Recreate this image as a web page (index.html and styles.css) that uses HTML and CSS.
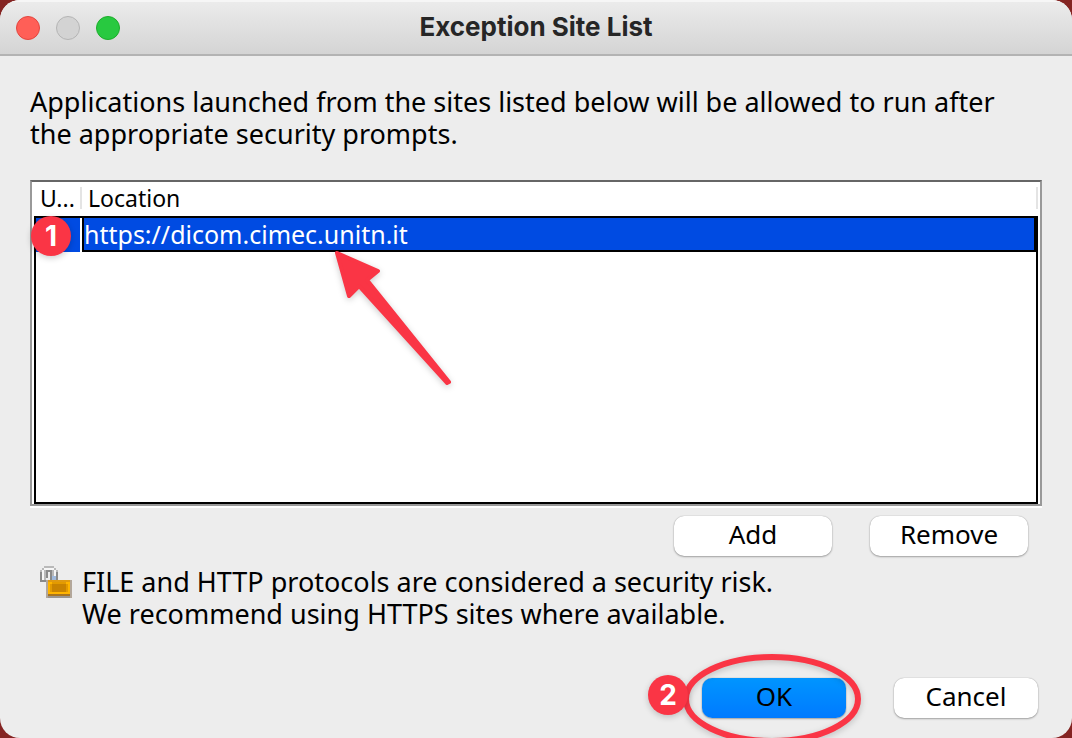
FILE: index.html
```html
<!DOCTYPE html>
<html lang="en">
<head>
<meta charset="utf-8">
<title>Exception Site List</title>
<link rel="stylesheet" href="styles.css">
</head>
<body>
<main class="window">
  <header class="titlebar">
    <div class="lights">
      <button class="light close" aria-label="Close"></button>
      <button class="light minimize" aria-label="Minimize" disabled></button>
      <button class="light zoom" aria-label="Zoom"></button>
    </div>
    <h1 class="title">Exception Site List</h1>
  </header>
  <div class="content">
    <p class="intro">Applications launched from the sites listed below will be allowed to run after the appropriate security prompts.</p>
    <div class="list">
      <table class="sites">
        <thead>
          <tr><th class="col-user" scope="col"><span class="label">U...</span></th><th scope="col"><span class="label">Location</span></th></tr>
        </thead>
        <tbody>
          <tr class="selected">
            <td class="user"><span class="badge badge-one">1</span></td>
            <td class="location">https://dicom.cimec.unitn.it<svg class="arrow" viewBox="0 0 130 145" aria-hidden="true"><path d="M7 7 L48 25 L37 34 L119 136 L117 137 L29 40 L19 50 Z"/></svg></td>
          </tr>
          <tr class="rest"><td colspan="2"></td></tr>
        </tbody>
      </table>
    </div>
    <div class="actions edit">
      <button class="button">Add</button>
      <button class="button">Remove</button>
    </div>
    <div class="notice">
      <svg class="lock" viewBox="0 0 16 16" shape-rendering="crispEdges" aria-hidden="true">
        <path fill="#b9b9b9" d="M2 0h5v1h1v1h1v6H6V3H5V2H4v1H3v5H0V2h1V1h1z"/>
        <path fill="#8a8a8a" d="M0 3h1v5H0zM3 3h1v3H3zM1 7h2v1H1zM8 3h1v4H8zM3 2h3v1H3zM5 3h1v4H5z"/>
        <path fill="#f6f6f6" d="M2 1h5v1H2zM1 2h1v5H1zM7 2h1v3H7z"/>
        <path fill="#9fb9dc" d="M6 5h2v2H6z"/>
        <path fill="#b3a79a" d="M3 7h13v9H3z"/>
        <path fill="#9b9690" d="M4 15h11v1H4z"/>
        <path fill="#e09a10" d="M4 7h11v1H4z"/>
        <path fill="#ffb400" d="M4 8h11v6H4z"/>
        <path fill="#c98300" d="M6 9h7v4H6z"/>
        <path fill="#e39a00" d="M5 9h1v4H5zM13 9h1v4h-1zM6 8h7v1H6z"/>
        <path fill="#a87420" d="M4 14h11v1H4z"/>
      </svg>
      <p>FILE and HTTP protocols are considered a security risk.<br>We recommend using HTTPS sites where available.</p>
    </div>
    <div class="actions confirm">
      <div class="marked">
        <button class="button primary">OK</button>
        <svg class="ring" viewBox="0 0 178 90" aria-hidden="true"><ellipse cx="89" cy="45" rx="86" ry="42"/></svg>
        <span class="badge badge-two">2</span>
      </div>
      <button class="button">Cancel</button>
    </div>
  </div>
</main>
</body>
</html>
```
FILE: styles.css
```css
* { box-sizing: border-box; }

body {
  margin: 0;
  background: #842422;
  font: 27px/32px "Noto Sans", sans-serif;
  color: #000;
}

p, h1 { margin: 0; }

.window {
  display: flex;
  flex-direction: column;
  min-height: 100vh;
  overflow: hidden;
  border-radius: 20px;
  background: #ededed;
}

.titlebar {
  display: grid;
  grid-template-columns: 1fr auto 1fr;
  align-items: center;
  height: 56px;
  padding: 0 16px;
  border-bottom: 2px solid #b3b3b3;
  background: linear-gradient(#ececec, #d4d4d4);
  box-shadow: inset 0 2px #f6f6f6;
}

.lights { display: flex; gap: 16px; padding-top: 2px; }

.light {
  width: 24px;
  height: 24px;
  padding: 0;
  border: 1px solid;
  border-radius: 50%;
}

.close { background: #ff5f57; border-color: #e2463f; }
.minimize { background: #d3d3d3; border-color: #b4b4b4; }
.zoom { background: #28c940; border-color: #1dad2b; }

.title {
  color: #262626;
  font: bold 26px/32px Inter, sans-serif;
}

.content {
  display: flex;
  flex: 1;
  flex-direction: column;
  padding: 30px 30px 20px;
}

.intro { margin-bottom: 30px; }

.list {
  display: flex;
  flex: 1;
  padding: 0 2px;
  border: 2px solid #999;
  border-top-color: #666;
  background: #fff;
  box-shadow: 0 2px #fff;
}

.sites {
  width: 100%;
  border-spacing: 0;
  table-layout: fixed;
}

.sites th {
  height: 34px;
  padding: 0 0 2px;
  font-size: 23px;
  font-weight: normal;
  line-height: 22px;
  text-align: left;
}

.sites th .label {
  display: block;
  padding-left: 6px;
  border-right: 2px solid #e4e4e4;
}

.sites .col-user { width: 48px; }

.sites td { padding: 0; }

.selected td {
  position: relative;
  height: 36px;
  border-top: 2px solid #000;
  background: #004be2;
  color: #fff;
  font-size: 25px;
  line-height: 32px;
}

.sites .user {
  border-left: 2px solid #000;
  box-shadow: inset -2px 0 #fff;
}

.sites .location {
  border: 2px solid #000;
  border-right-width: 4px;
}

.rest td {
  height: 252px;
  border: 2px solid #000;
  border-top: 0;
}

.badge {
  position: absolute;
  width: 40px;
  height: 40px;
  border-radius: 50%;
  background: #fa3545;
  box-shadow: 0 2px 6px rgb(0 0 0 / 20%);
  color: #fff;
  font: bold 28px/40px Inter, sans-serif;
  text-align: center;
}

.badge-one { left: -5px; top: -2px; }
.badge-two { left: -54px; top: -3px; }

.arrow, .ring {
  position: absolute;
  fill: none;
  filter: drop-shadow(0 2px 3px rgb(0 0 0 / 20%));
  pointer-events: none;
}

.arrow { left: 246px; top: 28px; width: 130px; height: 145px; }
.arrow path { fill: #fa3545; stroke: #fa3545; stroke-width: 4; stroke-linejoin: round; }

.ring { left: -19px; top: -24px; width: 178px; height: 90px; }
.ring ellipse { stroke: #fa3545; stroke-width: 6; }

.actions { display: flex; justify-content: flex-end; }
.edit { gap: 38px; padding: 10px 14px 0; }
.confirm { gap: 48px; padding: 0 4px; }

.button {
  min-width: 158px;
  height: 40px;
  padding: 0 16px 4px;
  border: 0;
  border-radius: 10px;
  background: #fff;
  box-shadow: 0 0 1px rgb(0 0 0 / 35%), 0 1px 2px rgb(0 0 0 / 30%);
  color: #000;
  font: inherit;
  font-size: 26px;
}

.confirm .button { min-width: 144px; }

.button.primary { background: linear-gradient(#0095ff, #007aff); }

.marked { position: relative; }

.notice {
  display: flex;
  gap: 10px;
  padding: 10px 10px 48px;
}

.lock { width: 32px; height: 32px; }
```
